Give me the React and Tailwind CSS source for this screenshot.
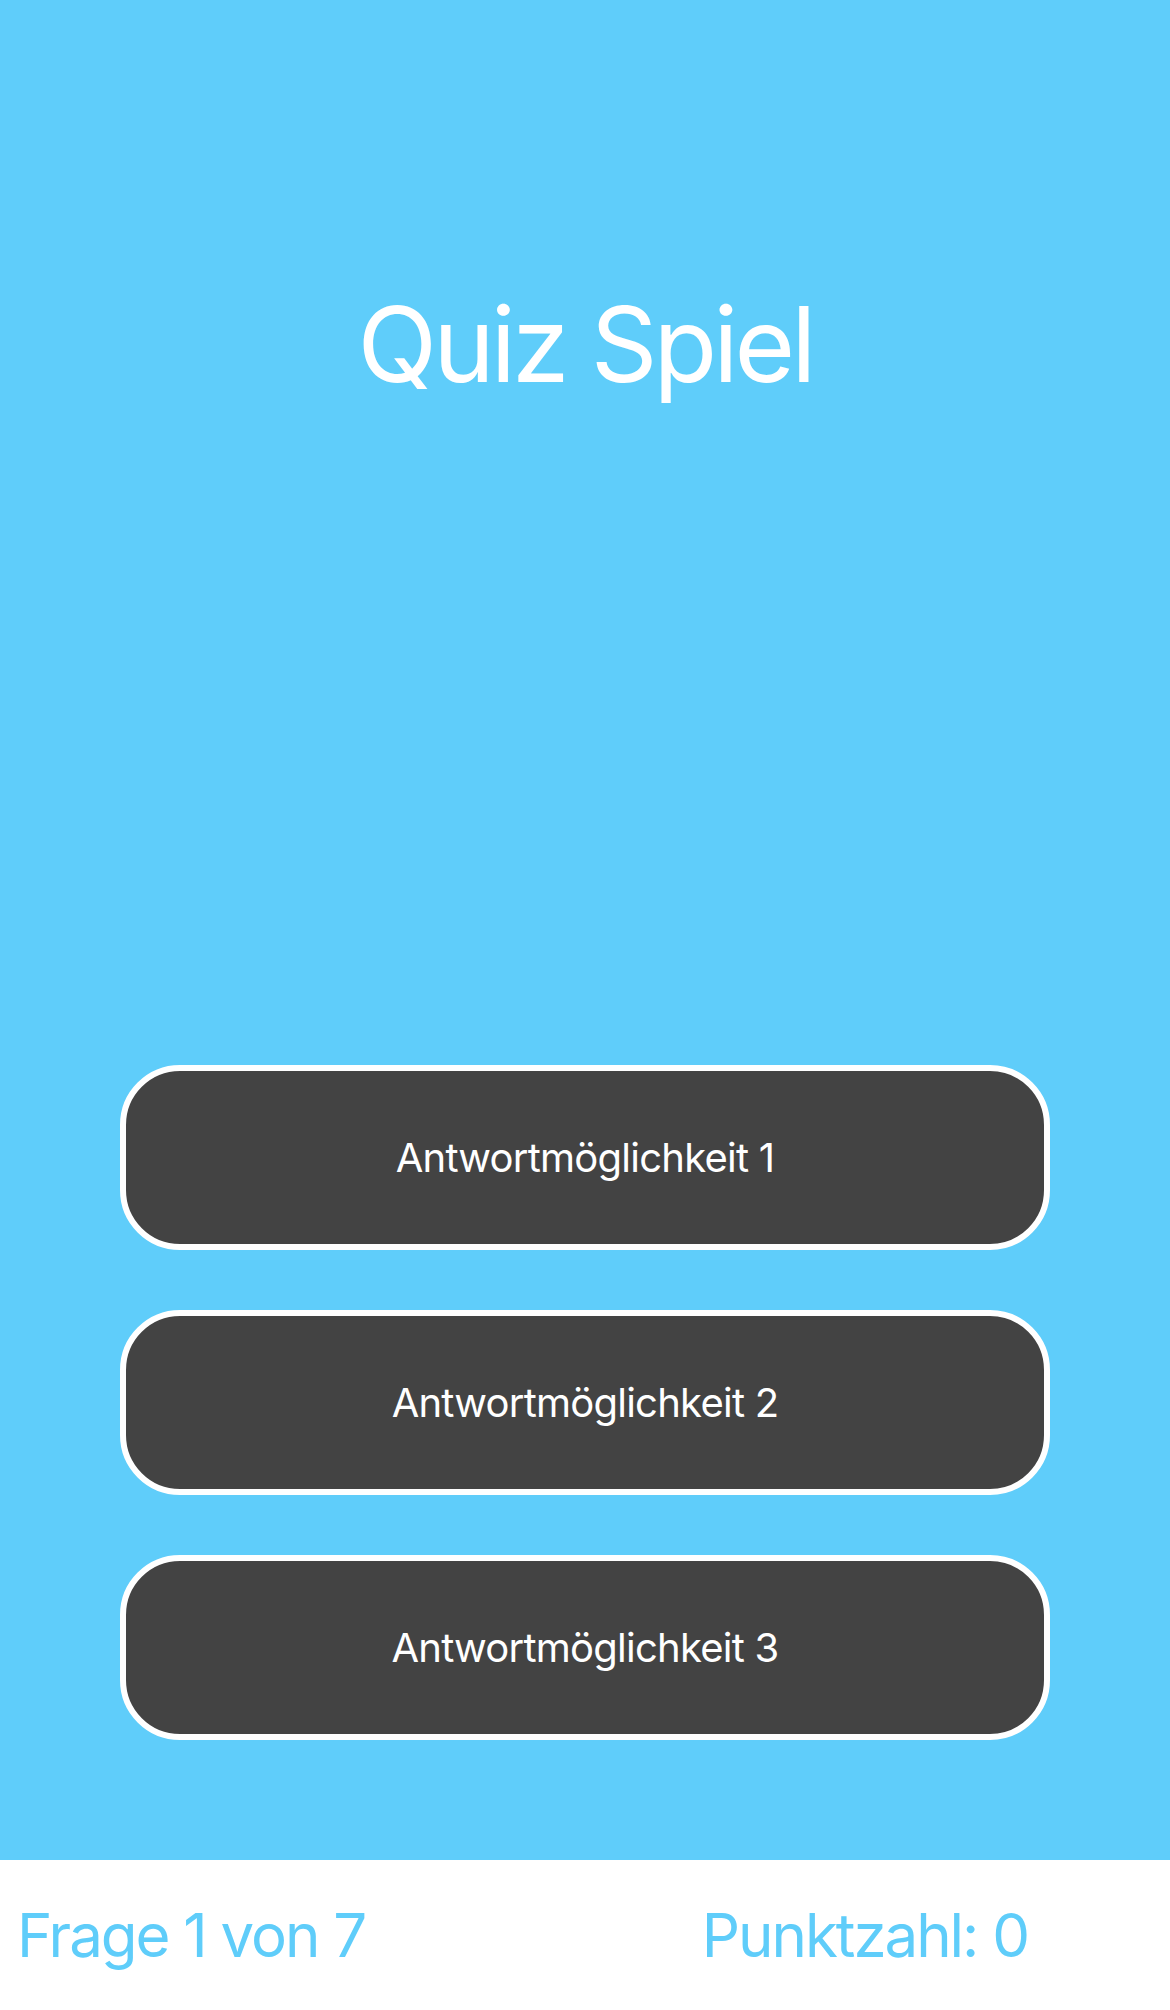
export default function App() {
  const answers = ["Antwortmöglichkeit 1", "Antwortmöglichkeit 2", "Antwortmöglichkeit 3"];
  return (
    <div className="w-[1170px] h-[2010px] flex flex-col" style={{ fontFamily: "Inter, 'Noto Sans', sans-serif" }}>
      <div className="h-[1860px] bg-[#5fcdfa] flex flex-col items-center">
        <h1 className="pt-[292px] text-[104px] leading-none font-normal text-white tracking-[-0.038em]">Quiz Spiel</h1>
        <div className="mt-[669px] flex flex-col gap-[60px]">
          {answers.map((a) => (
            <button
              key={a}
              className="w-[930px] h-[185px] rounded-[60px] border-[6px] border-white bg-[#434343] text-white text-[40px] leading-none tracking-[-0.019em] flex items-center justify-center"
            >
              {a}
            </button>
          ))}
        </div>
      </div>
      <div className="h-[150px] bg-white flex items-center justify-between pl-[17px] pr-[142px] text-[#5fcdfa] text-[60px] leading-none tracking-[-0.034em]">
        <span>Frage 1 von 7</span>
        <span>Punktzahl: 0</span>
      </div>
    </div>
  );
}
